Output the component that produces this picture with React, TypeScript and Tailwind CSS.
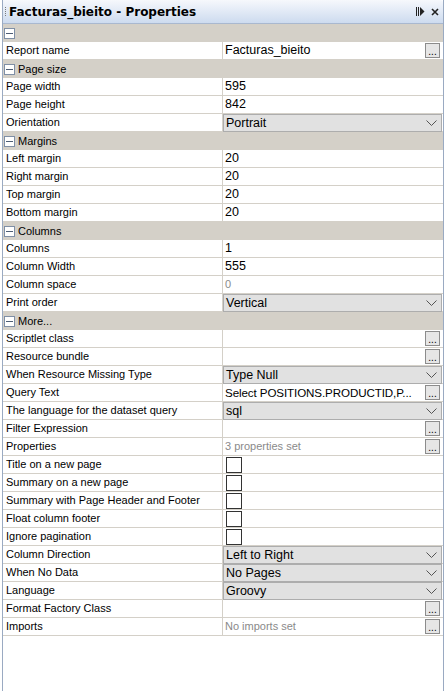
import { ReactNode } from "react";

type Row =
  | { kind: "section"; label: string }
  | { kind: "text"; label: string; value?: string; muted?: boolean; button?: boolean; tight?: boolean }
  | { kind: "select"; label: string; value: string }
  | { kind: "check"; label: string };

const rows: Row[] = [
  { kind: "section", label: "" },
  { kind: "text", label: "Report name", value: "Facturas_bieito", button: true },
  { kind: "section", label: "Page size" },
  { kind: "text", label: "Page width", value: "595" },
  { kind: "text", label: "Page height", value: "842" },
  { kind: "select", label: "Orientation", value: "Portrait" },
  { kind: "section", label: "Margins" },
  { kind: "text", label: "Left margin", value: "20" },
  { kind: "text", label: "Right margin", value: "20" },
  { kind: "text", label: "Top margin", value: "20" },
  { kind: "text", label: "Bottom margin", value: "20" },
  { kind: "section", label: "Columns" },
  { kind: "text", label: "Columns", value: "1" },
  { kind: "text", label: "Column Width", value: "555" },
  { kind: "text", label: "Column space", value: "0", muted: true },
  { kind: "select", label: "Print order", value: "Vertical" },
  { kind: "section", label: "More..." },
  { kind: "text", label: "Scriptlet class", button: true },
  { kind: "text", label: "Resource bundle", button: true },
  { kind: "select", label: "When Resource Missing Type", value: "Type Null" },
  { kind: "text", label: "Query Text", value: "Select POSITIONS.PRODUCTID,P...", button: true, tight: true },
  { kind: "select", label: "The language for the dataset query", value: "sql" },
  { kind: "text", label: "Filter Expression", button: true },
  { kind: "text", label: "Properties", value: "3 properties set", muted: true, button: true },
  { kind: "check", label: "Title on a new page" },
  { kind: "check", label: "Summary on a new page" },
  { kind: "check", label: "Summary with Page Header and Footer" },
  { kind: "check", label: "Float column footer" },
  { kind: "check", label: "Ignore pagination" },
  { kind: "select", label: "Column Direction", value: "Left to Right" },
  { kind: "select", label: "When No Data", value: "No Pages" },
  { kind: "select", label: "Language", value: "Groovy" },
  { kind: "text", label: "Format Factory Class", button: true },
  { kind: "text", label: "Imports", value: "No imports set", muted: true, button: true },
];

function MinusBox() {
  return (
    <span className="flex h-[11px] w-[11px] items-center justify-center border border-[#7f8fa6] bg-white">
      <span className="h-px w-[7px] bg-[#4d5d75]" />
    </span>
  );
}

function DotsButton() {
  return (
    <span className="flex h-[15px] w-[15px] shrink-0 items-end justify-center border border-[#8c8c8c] bg-[#e6e6e6] pb-[1px] text-[10px] leading-[8px] text-black">
      ...
    </span>
  );
}

function Chevron() {
  return (
    <svg width="11" height="7" viewBox="0 0 11 7" className="text-[#555]">
      <path d="M0.5 0.5 L5.5 5.5 L10.5 0.5" fill="none" stroke="currentColor" strokeWidth="1" />
    </svg>
  );
}

function ValueCell({ row }: { row: Row }): ReactNode {
  if (row.kind === "select") {
    return (
      <div className="flex h-[18px] items-center justify-between border border-[#adadad] bg-[#e1e1e1] pl-[2px] pr-[4px] text-[12.5px] text-black">
        <span>{row.value}</span>
        <Chevron />
      </div>
    );
  }
  if (row.kind === "check") {
    return (
      <div className="flex h-[17px] items-center pl-[3px]">
        <span className="h-[16px] w-[16px] border border-[#333] bg-white" />
      </div>
    );
  }
  if (row.kind === "text") {
    let cls = "whitespace-nowrap text-[12.5px] text-black";
    if (row.muted) cls = "whitespace-nowrap text-[11px] text-[#8a8a8a]";
    if (row.tight) cls = "whitespace-nowrap text-[11.6px] tracking-[-0.1px] text-black";
    return (
      <div className="flex h-[17px] items-center justify-between gap-[1px] pl-[2px] pr-[2px]">
        <span className={cls}>{row.value}</span>
        {row.button && <DotsButton />}
      </div>
    );
  }
  return null;
}

export default function App() {
  return (
    <div
      className="h-[691px] w-[447px] bg-white"
      style={{ fontFamily: '"Liberation Sans", Arial, sans-serif' }}
    >
      <div className="ml-[2px] flex h-[691px] w-[442px] flex-col border-x border-[#9aaac2]">
        <div className="flex h-[24px] shrink-0 items-center justify-between rounded-tr-[3px] border-b border-[#a9b8cf] bg-gradient-to-b from-[#f6f8fc] to-[#cddbef] pl-[1px] pr-[4px]">
          <div className="flex items-center gap-[3px]">
            <span className="flex flex-col gap-[1px] pl-[1px]">
              <span className="h-px w-px bg-[#7a7a7a]" />
              <span className="h-px w-px bg-[#7a7a7a]" />
              <span className="h-px w-px bg-[#7a7a7a]" />
              <span className="h-px w-px bg-[#7a7a7a]" />
              <span className="h-px w-px bg-[#7a7a7a]" />
            </span>
            <span
              className="text-[12px] font-bold text-black"
              style={{ fontFamily: '"DejaVu Sans", sans-serif' }}
            >
              Facturas_bieito - Properties
            </span>
          </div>
          <div className="flex items-center gap-[6px]">
            <svg width="9" height="9" viewBox="0 0 9 9">
              <rect x="0" y="0" width="1" height="9" fill="#222" />
              <rect x="2" y="0" width="1" height="9" fill="#222" />
              <path d="M4 0 L8.5 4.5 L4 9 Z" fill="#222" />
            </svg>
            <svg width="8" height="8" viewBox="0 0 8 8">
              <path d="M1 1 L7 7 M7 1 L1 7" stroke="#222" strokeWidth="1.6" />
            </svg>
          </div>
        </div>
        <div className="flex flex-col">
          {rows.map((row, i) =>
            row.kind === "section" ? (
              <div
                key={i}
                className="flex h-[18px] items-center gap-[3px] bg-[#d4d0c8] pl-[1px] text-[11px] text-black"
              >
                <MinusBox />
                <span>{row.label}</span>
              </div>
            ) : (
              <div key={i} className="flex h-[18px] border-b border-[#d4d0c8]">
                <div className="flex w-[220px] shrink-0 items-center border-r border-[#d4d0c8] pl-[3px] text-[11px] text-black">
                  {row.label}
                </div>
                <div className="min-w-0 flex-1 pr-[1px]">
                  <ValueCell row={row} />
                </div>
              </div>
            )
          )}
        </div>
        <div className="flex-1" />
      </div>
    </div>
  );
}
